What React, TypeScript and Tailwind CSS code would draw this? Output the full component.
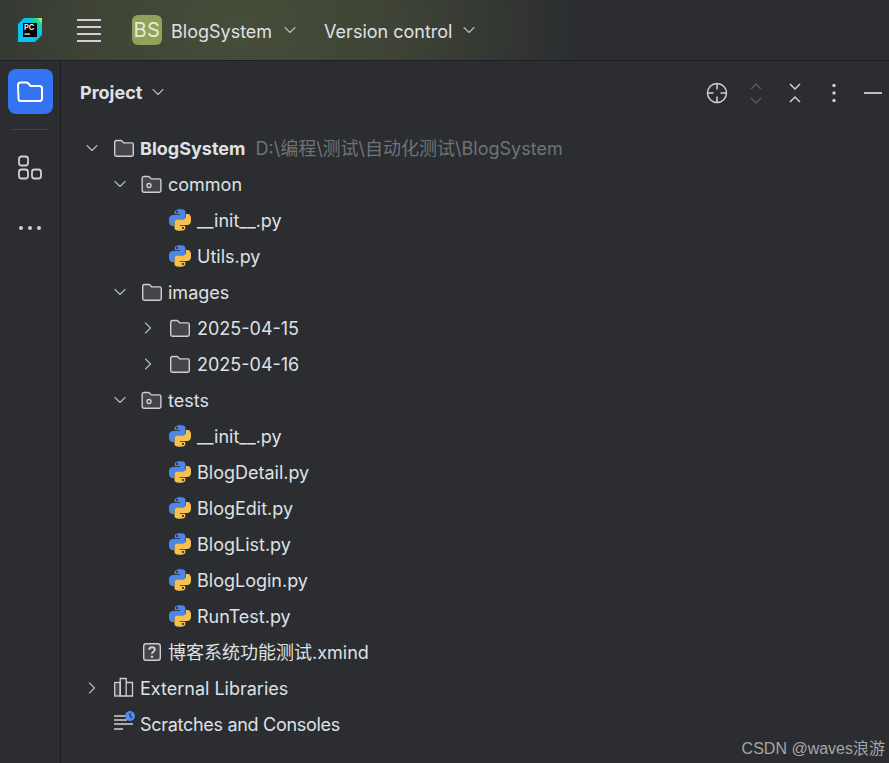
import { ChevronDown, ChevronRight } from "lucide-react";

type Row = {
  depth: number;
  label: string;
  icon: string;
  arrow?: "down" | "right";
  bold?: boolean;
  path?: string;
  tight?: boolean;
};

const rows: Row[] = [
  { depth: 0, label: "BlogSystem", icon: "folder", arrow: "down", bold: true, path: "D:\\编程\\测试\\自动化测试\\BlogSystem" },
  { depth: 1, label: "common", icon: "package", arrow: "down" },
  { depth: 2, label: "__init__.py", icon: "python" },
  { depth: 2, label: "Utils.py", icon: "python" },
  { depth: 1, label: "images", icon: "folder", arrow: "down" },
  { depth: 2, label: "2025-04-15", icon: "folder", arrow: "right" },
  { depth: 2, label: "2025-04-16", icon: "folder", arrow: "right" },
  { depth: 1, label: "tests", icon: "package", arrow: "down" },
  { depth: 2, label: "__init__.py", icon: "python" },
  { depth: 2, label: "BlogDetail.py", icon: "python" },
  { depth: 2, label: "BlogEdit.py", icon: "python" },
  { depth: 2, label: "BlogList.py", icon: "python" },
  { depth: 2, label: "BlogLogin.py", icon: "python" },
  { depth: 2, label: "RunTest.py", icon: "python" },
  { depth: 1, label: "博客系统功能测试.xmind", icon: "unknown" },
  { depth: 0, label: "External Libraries", icon: "library", arrow: "right" },
  { depth: 0, label: "Scratches and Consoles", icon: "scratch", tight: true },
];

const depthPad: Record<number, string> = {
  0: "pl-[20px]",
  1: "pl-[48px]",
  2: "pl-[76px]",
};

const labelGap: Record<number, string> = {
  0: "ml-[5px]",
  1: "ml-[5px]",
  2: "ml-[6px]",
};

function PyCharmLogo() {
  return (
    <svg width="24" height="24" viewBox="0 0 24 24">
      <defs>
        <linearGradient id="pc" x1="0" y1="1" x2="1" y2="0">
          <stop offset="0" stopColor="#07c3f2" />
          <stop offset="0.65" stopColor="#07c3f2" />
          <stop offset="0.85" stopColor="#21d789" />
          <stop offset="1" stopColor="#fcf84a" />
        </linearGradient>
      </defs>
      <path d="M6 0h18v17l-7 7H0V6z" fill="url(#pc)" />
      <rect x="5" y="5" width="14" height="14" fill="#000" />
      <text x="6" y="12" fontSize="7.5" fontWeight="600" fill="#fff" fontFamily="Inter, sans-serif">PC</text>
      <rect x="6.500" y="15.500" width="5.500" height="1.200" fill="#fff" />
    </svg>
  );
}

function FolderIcon({ size = 22 }: { size?: number }) {
  return (
    <svg width={size} height={size} viewBox="0 0 22 22" fill="#43454a" stroke="#ced0d6" strokeWidth="1.4">
      <path d="M1.7 5.2c0-1 .8-1.7 1.7-1.7h4.4c.5 0 .9.2 1.2.5l1.7 1.9h7.900c1 0 1.700.8 1.700 1.700v10c0 1-.8 1.700-1.700 1.700H3.400c-1 0-1.700-.8-1.700-1.700z" />
    </svg>
  );
}

function PackageIcon() {
  return (
    <svg width="22" height="22" viewBox="0 0 22 22" fill="none" stroke="#ced0d6" strokeWidth="1.4">
      <path d="M1.2 5.2c0-1 .8-1.700 1.700-1.700h4.400c.5 0 .9.2 1.200.5l1.700 1.900h8c1 0 1.700.8 1.700 1.700v10c0 1-.8 1.700-1.700 1.700H2.900c-1 0-1.700-.8-1.700-1.700z" fill="#43454a" />
      <circle cx="8" cy="12.500" r="2" />
    </svg>
  );
}

function PythonIcon() {
  const blue = "M54.9 0.9C50.3 0.9 45.9 1.3 42 2C30.5 4 28.4 8.3 28.4 16.1V26.4H55.6V29.8H18.2C10.3 29.8 3.4 34.6 1.2 43.6C-1.3 54 -1.4 60.4 1.2 71.2C3.1 79.3 7.8 85 15.7 85H25V72.6C25 63.6 32.8 55.7 42 55.7H69.2C76.8 55.7 82.8 49.5 82.8 41.9V16.1C82.8 8.7 76.6 3.2 69.2 2C64.5 1.2 59.6 0.9 54.9 0.9ZM40.2 9.2C43 9.2 45.3 11.5 45.3 14.4C45.3 17.2 43 19.5 40.2 19.5C37.4 19.5 35.1 17.2 35.1 14.4C35.1 11.5 37.4 9.2 40.2 9.2Z";
  return (
    <svg width="22" height="22" viewBox="0 0 110 110">
      <path d={blue} fill="#4d85e8" fillRule="evenodd" />
      <path d={blue} fill="#f5c04f" fillRule="evenodd" transform="rotate(180 55 55)" />
    </svg>
  );
}

function UnknownIcon() {
  return (
    <svg width="22" height="22" viewBox="0 0 22 22" fill="none">
      <rect x="2.700" y="2.700" width="16.600" height="16.600" rx="2.500" stroke="#ced0d6" strokeWidth="1.400" fill="#43454a" />
      <path d="M8.200 8.700c0-1.600 1.300-2.500 2.800-2.500s2.800.9 2.800 2.400c0 2.200-2.800 2.200-2.800 4.200" stroke="#ced0d6" strokeWidth="2" />
      <circle cx="11" cy="15.800" r="1.200" fill="#ced0d6" />
    </svg>
  );
}

function LibraryIcon() {
  return (
    <svg width="22" height="22" viewBox="0 0 22 22" fill="none" stroke="#ced0d6" strokeWidth="1.300">
      <rect x="1.700" y="5.500" width="5.500" height="13.500" fill="#43454a" />
      <path d="M7.200 1.500h6v17.500h-6zM13.200 5.500h6.300v13.500h-6.300z" />
    </svg>
  );
}

function ScratchIcon() {
  return (
    <svg className="overflow-visible" width="22" height="22" viewBox="0 0 22 22" fill="none">
      <path d="M1 3h11M1 7h13M1 11h19M1 16h9" stroke="#ced0d6" strokeWidth="1.500" />
      <circle cx="17" cy="3" r="5" fill="#548af7" />
      <path d="M17 0v3l2 2" stroke="#2b2d30" strokeWidth="1.200" />
    </svg>
  );
}

function RowIcon({ name }: { name: string }) {
  if (name === "folder") return <FolderIcon />;
  if (name === "package") return <PackageIcon />;
  if (name === "python") return <PythonIcon />;
  if (name === "unknown") return <UnknownIcon />;
  if (name === "library") return <LibraryIcon />;
  return <ScratchIcon />;
}

function TreeRow({ row }: { row: Row }) {
  return (
    <div className={`flex h-9 items-center ${depthPad[row.depth]}`}>
      <span className="flex w-[22px] justify-center text-[#b4b8bf]">
        {row.arrow === "down" && <ChevronDown size={20} strokeWidth={1.4} />}
        {row.arrow === "right" && <ChevronRight size={20} strokeWidth={1.4} />}
      </span>
      <span className="ml-[10px] flex w-[22px] shrink-0 justify-center">
        <RowIcon name={row.icon} />
      </span>
      <span className={`${labelGap[row.depth]} whitespace-nowrap pt-[2px] text-[#dfe1e5] ${row.bold ? "font-bold" : ""} ${row.tight ? "tracking-[-0.3px]" : ""}`}>
        {row.label}
      </span>
      {row.path && <span className="ml-[10px] whitespace-nowrap pt-[2px] text-[#6f737a]">{row.path}</span>}
    </div>
  );
}

export default function App() {
  return (
    <div className="relative flex h-[763px] w-[889px] flex-col overflow-hidden bg-[#2b2d30] font-['Inter','Noto_Sans_CJK_SC',sans-serif] text-[18px] leading-none">
      <header className="flex h-[61px] shrink-0 items-center border-b border-[#1e1f22] bg-[radial-gradient(ellipse_340px_260px_at_240px_30px,#464d39_0%,#3f4436_45%,#2b2d30_100%)] pl-[18px] text-[#dfe1e5]">
        <PyCharmLogo />
        <svg className="ml-[34px]" width="26" height="26" viewBox="0 0 26 26" stroke="#ced0d6" strokeWidth="2">
          <path d="M1 3h24M1 10h24M1 17h24M1 24h24" />
        </svg>
        <span className="ml-[30px] flex h-[30px] w-[30px] items-center justify-center rounded-md bg-[#8fa35a] text-[20px] tracking-[0.5px] text-[#e6ead8]">BS</span>
        <span className="ml-[9px] pt-[3px]">BlogSystem</span>
        <ChevronDown className="ml-[8px] text-[#b4b8bf]" size={20} strokeWidth={1.4} />
        <span className="ml-[24px] pt-[3px]">Version control</span>
        <ChevronDown className="ml-[7px] text-[#b4b8bf]" size={20} strokeWidth={1.4} />
      </header>

      <div className="flex flex-1">
        <aside className="flex w-[61px] shrink-0 flex-col items-center border-r border-[#1e1f22] pt-[8px]">
          <div className="flex h-[45px] w-[45px] items-center justify-center rounded-lg bg-[#3574f0]">
            <svg width="30" height="30" viewBox="0 0 30 30" fill="none" stroke="#fff" strokeWidth="2">
              <path d="M3 8c0-1.400 1-2.500 2.500-2.500h6c.7 0 1.200.3 1.700.8l2.300 2.700h9c1.400 0 2.500 1 2.500 2.500v10c0 1.400-1 2.500-2.500 2.500h-18.500c-1.400 0-2.500-1-2.500-2.500z" />
            </svg>
          </div>
          <div className="mt-[15px] h-px w-[36px] bg-[#43454a]" />
          <svg className="mt-[25px]" width="26" height="26" viewBox="0 0 26 26" fill="none" stroke="#ced0d6" strokeWidth="1.800">
            <rect x="2" y="1.500" width="9" height="9" rx="2.500" />
            <rect x="2" y="14.500" width="9" height="9" rx="2.500" />
            <rect x="15" y="14.500" width="9" height="9" rx="2.500" />
          </svg>
          <svg className="mt-[44px]" width="26" height="6" viewBox="0 0 26 6" fill="#ced0d6">
            <circle cx="4" cy="3" r="2" />
            <circle cx="13" cy="3" r="2" />
            <circle cx="22" cy="3" r="2" />
          </svg>
        </aside>

        <main className="flex-1">
          <div className="flex h-[61px] items-center pl-[19px] pr-[4px] text-[#dfe1e5]">
            <span className="pt-[2px] font-bold">Project</span>
            <ChevronDown className="ml-[6px] mt-[1px] text-[#b4b8bf]" size={20} strokeWidth={1.4} />
            <div className="ml-auto mt-[2px] flex items-center gap-[15px] text-[#ced0d6]">
              <svg width="24" height="24" viewBox="0 0 24 24" fill="none" stroke="currentColor" strokeWidth="1.500">
                <circle cx="12" cy="12" r="9.500" />
                <path d="M12 2.500v6M12 15.500v6M2.500 12h6M15.500 12h6" />
              </svg>
              <svg width="24" height="24" viewBox="0 0 24 24" fill="none" stroke="#55585d" strokeWidth="1.500">
                <path d="M7 8l5-5 5 5M7 17l5 5 5-5" />
              </svg>
              <svg width="24" height="24" viewBox="0 0 24 24" fill="none" stroke="currentColor" strokeWidth="1.500">
                <path d="M7 3l5 5 5-5M7 21l5-5 5 5" />
              </svg>
              <svg width="24" height="24" viewBox="0 0 24 24" fill="currentColor">
                <circle cx="12" cy="4.500" r="1.700" />
                <circle cx="12" cy="12" r="1.700" />
                <circle cx="12" cy="19.500" r="1.700" />
              </svg>
              <svg width="24" height="24" viewBox="0 0 24 24" stroke="currentColor" strokeWidth="1.800">
                <path d="M3 12h18" />
              </svg>
            </div>
          </div>
          <div className="pt-[8px]">
            {rows.map((row, i) => (
              <TreeRow key={i} row={row} />
            ))}
          </div>
        </main>
      </div>

      <span className="absolute bottom-[6px] right-[4px] font-['Liberation_Sans','Noto_Sans_CJK_SC',sans-serif] text-[16px] text-[#a5a6a8]">
        CSDN @waves浪游
      </span>
    </div>
  );
}
